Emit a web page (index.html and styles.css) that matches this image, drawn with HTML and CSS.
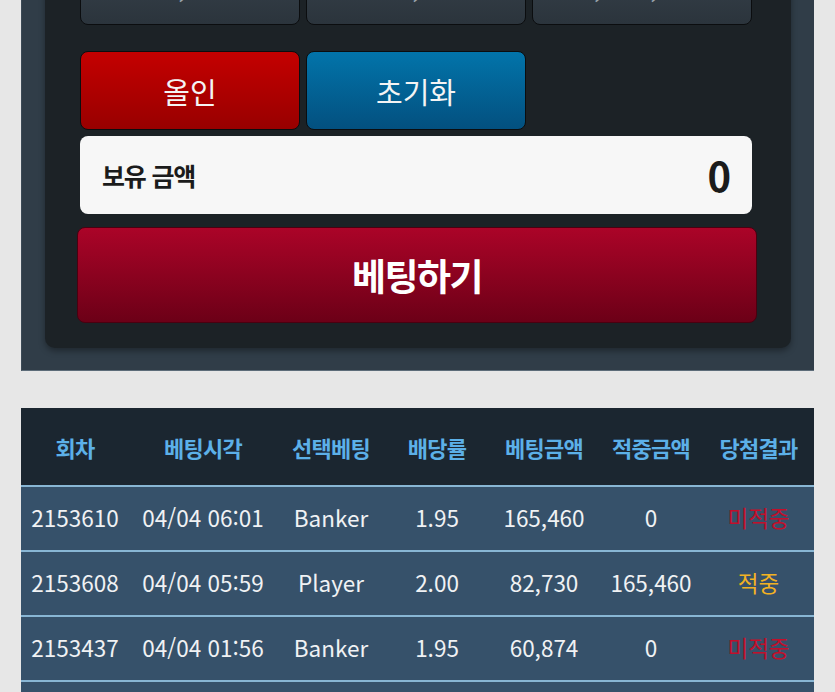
FILE: index.html
```html
<!DOCTYPE html>
<html lang="ko">
<head>
<meta charset="utf-8">
<title>베팅</title>
<link rel="stylesheet" href="styles.css">
</head>
<body>
<div class="page">
  <section class="bet-wrap">
    <div class="bet-panel">
      <div class="btn-grid">
        <button class="btn btn-chip">50,000</button>
        <button class="btn btn-chip">100,000</button>
        <button class="btn btn-chip">1,000,000</button>
      </div>
      <div class="btn-grid btn-grid-actions">
        <button class="btn btn-allin">올인</button>
        <button class="btn btn-reset">초기화</button>
      </div>
      <div class="balance">
        <span class="balance-label">보유 금액</span>
        <span class="balance-value">0</span>
      </div>
      <button class="btn-bet">베팅하기</button>
    </div>
  </section>

  <table class="history">
    <colgroup>
      <col class="c1"><col class="c2"><col class="c3"><col class="c4"><col class="c5"><col class="c6"><col class="c7">
    </colgroup>
    <thead>
      <tr>
        <th>회차</th><th>베팅시각</th><th>선택베팅</th><th>배당률</th><th>베팅금액</th><th>적중금액</th><th>당첨결과</th>
      </tr>
    </thead>
    <tbody>
      <tr>
        <td>2153610</td><td>04/04 06:01</td><td>Banker</td><td>1.95</td><td>165,460</td><td>0</td><td class="lose">미적중</td>
      </tr>
      <tr>
        <td>2153608</td><td>04/04 05:59</td><td>Player</td><td>2.00</td><td>82,730</td><td>165,460</td><td class="win">적중</td>
      </tr>
      <tr>
        <td>2153437</td><td>04/04 01:56</td><td>Banker</td><td>1.95</td><td>60,874</td><td>0</td><td class="lose">미적중</td>
      </tr>
      <tr>
        <td>2153435</td><td>04/04 01:52</td><td>Player</td><td>2.00</td><td>30,437</td><td>60,874</td><td class="win">적중</td>
      </tr>
    </tbody>
  </table>
</div>
</body>
</html>
```

FILE: styles.css
```css
* { box-sizing: border-box; }

html, body {
  margin: 0;
  padding: 0;
  background: #e7e7e7;
  overflow: hidden;
}

body {
  font-family: "Noto Sans CJK KR", "Noto Sans", sans-serif;
  color: #f2f2f2;
}

.page {
  margin-top: -94px;
  padding: 0 21px;
}

.bet-wrap {
  background: #303d48;
  padding: 20px 23px 22px 23px;
  border-bottom: 1px solid #5d6c79;
  border-left: 1px solid #3c4a56;
}

.bet-panel {
  background: #1c2226;
  border-radius: 0 0 10px 10px;
  padding: 20px 39px 25px 35px;
  box-shadow: 0 3px 6px rgba(0, 0, 0, 0.35);
}

.btn-grid {
  display: grid;
  grid-template-columns: repeat(3, 1fr);
  gap: 6px;
}

.btn-grid-actions {
  margin-top: 26px;
}

.btn {
  height: 79px;
  border: 1px solid #0b0d0f;
  border-radius: 8px;
  font-family: "Noto Sans CJK KR", sans-serif;
  font-size: 29px;
  color: #f4f4f4;
  padding: 0;
}

.btn-chip {
  background: linear-gradient(#3b4650, #2b343c);
  color: #9aa4ad;
  padding-bottom: 4px;
}

.btn-allin {
  background: linear-gradient(#c40000, #980000);
}

.btn-reset {
  background: linear-gradient(#0274aa, #03507f);
}

.balance {
  margin-top: 6px;
  height: 78px;
  background: #f7f7f7;
  border-radius: 8px;
  display: flex;
  align-items: center;
  justify-content: space-between;
  padding: 0 21px 0 22px;
  color: #1b1b1b;
  font-weight: 700;
}

.balance-label {
  font-size: 25px;
  letter-spacing: -1.2px;
}

.balance-value {
  font-size: 40px;
  line-height: 1;
}

.btn-bet {
  display: block;
  margin: 13px -5px 0 -3px;
  width: calc(100% + 8px);
  height: 96px;
  border: 1px solid #4a0010;
  border-radius: 8px;
  background: linear-gradient(#ab0428, #6c0017);
  color: #ffffff;
  font-family: "Noto Sans CJK KR", sans-serif;
  font-weight: 700;
  font-size: 37px;
  letter-spacing: -1.5px;
}

.history {
  margin-top: 37px;
  width: 100%;
  border-collapse: collapse;
  table-layout: fixed;
}

.c1 { width: 108px; }
.c2 { width: 148px; }
.c3 { width: 108px; }
.c4 { width: 104px; }
.c5 { width: 110px; }
.c6 { width: 104px; }
.c7 { width: 111px; }

.history th {
  background: #1b2630;
  color: #5cb0e8;
  font-size: 22px;
  font-weight: 700;
  height: 78px;
  padding: 0;
  letter-spacing: -0.8px;
}

.history td {
  background: #36516a;
  border-top: 2px solid #88b6d4;
  height: 65px;
  padding: 0 0 3px;
  text-align: center;
  font-size: 22.5px;
  color: #f0f2f4;
}

.history td.lose { color: #c20f2b; }
.history td.win { color: #f2b223; }
```
